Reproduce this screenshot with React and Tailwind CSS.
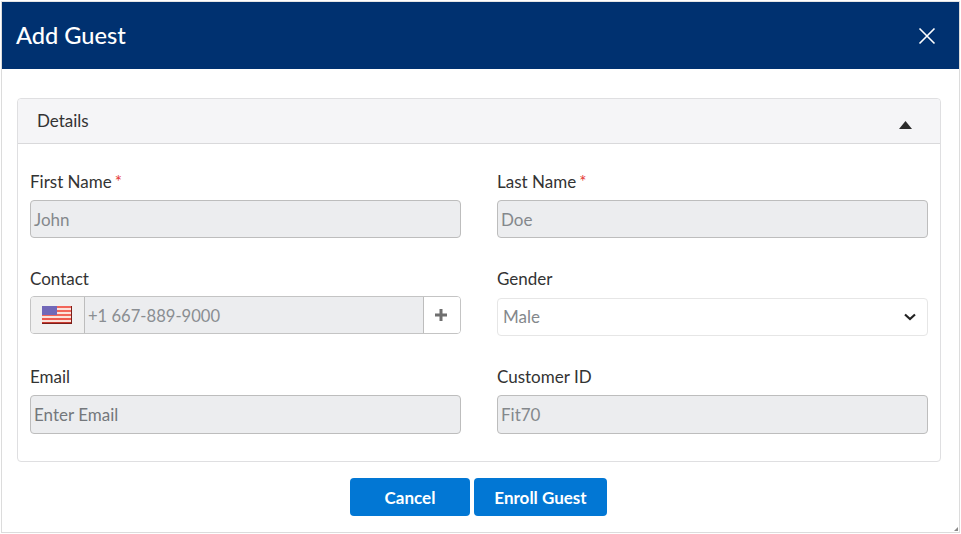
function Label({ children, required }) {
  return (
    <div className="h-[20px] flex items-center text-[17px] leading-[20px] text-[#333]">
      {children}
      {required && <span className="ml-[3px] text-[#e53935]">*</span>}
    </div>
  );
}

function TextField({ label, required, placeholder }) {
  return (
    <div className="flex flex-col">
      <Label required={required}>{label}</Label>
      <div className="mt-[8px] h-[38px] rounded-[4px] border border-[#bdbdbd] bg-[#ecedef] pl-[3px] pt-[2px] flex items-center text-[17px] text-[#84888c]">
        {placeholder}
      </div>
    </div>
  );
}

function Flag() {
  return (
    <svg width="30" height="18" viewBox="0 0 30 18" className="block blur-[0.4px]">
      <rect width="30" height="18" fill="#7a1f1a" />
      <rect y="0" width="29" height="2" fill="#f2665a" />
      <rect y="2" width="29" height="2" fill="#fbe3dc" />
      <rect y="4" width="29" height="2" fill="#f2665a" />
      <rect y="6" width="29" height="2" fill="#fbe3dc" />
      <rect y="8" width="29" height="2" fill="#f2665a" />
      <rect y="10" width="29" height="2" fill="#fbe3dc" />
      <rect y="12" width="29" height="2" fill="#ee5a4e" />
      <rect y="14" width="29" height="2" fill="#fbe3dc" />
      <rect y="16" width="29" height="1" fill="#c8392f" />
      <rect width="15" height="9" fill="#7268b8" />
    </svg>
  );
}

export default function App() {
  return (
    <div className="w-[961px] h-[534px] bg-white font-['Lato','Carlito','Open_Sans',sans-serif] p-[1px] overflow-hidden">
      <div className="relative h-[532px] border border-[#dcdcdc] border-t-[#e4e4e4] flex flex-col">
        <div className="h-[67px] shrink-0 bg-[#003170] flex items-center justify-between pl-[14px] pr-[23px]">
          <span className="text-[23.6px] text-white font-medium leading-none">Add Guest</span>
          <svg width="18" height="18" viewBox="0 0 18 18" fill="none" stroke="white" strokeWidth="1.6">
            <path d="M1.5 1.5 L16.5 16.5 M16.5 1.5 L1.5 16.5" />
          </svg>
        </div>

        <div className="mt-[29px] ml-[15px] w-[924px] h-[364px] rounded-[4px] border border-[#dfdfe1]">
          <div className="h-[45px] bg-[#f5f5f7] border-b border-[#d9d9db] rounded-t-[4px] flex items-center justify-between pl-[19px] pr-[28px]">
            <span className="text-[17px] text-[#333]">Details</span>
            <svg width="13" height="8" viewBox="0 0 13 8" className="mt-[7px]">
              <path d="M6.5 0 L13 8 L0 8 Z" fill="#2b2b2b" />
            </svg>
          </div>

          <div className="px-[12px] pt-[28px] grid grid-cols-2 gap-x-[36px]">
            <TextField label="First Name" required placeholder="John" />
            <TextField label="Last Name" required placeholder="Doe" />

            <div className="flex flex-col mt-[31px]">
              <Label>Contact</Label>
              <div className="mt-[7px] h-[38px] rounded-[4px] border border-[#c4c4c4] flex overflow-hidden">
                <div className="w-[54px] shrink-0 bg-[#f0f0f0] border-r border-[#bdbdbd] flex items-center justify-center pr-[2px]">
                  <Flag />
                </div>
                <div className="flex-1 bg-[#ecedef] flex items-center pl-[3px] pt-[2px] text-[16.6px] text-[#8a8e92]">+1 667-889-9000</div>
                <div className="w-[37px] shrink-0 bg-white border-l border-[#bdbdbd] flex items-center justify-center pr-[2px]">
                  <svg width="12" height="12" viewBox="0 0 12 12">
                    <path d="M4.5 0 H7.5 V4.5 H12 V7.5 H7.5 V12 H4.5 V7.5 H0 V4.5 H4.5 Z" fill="#6f6f6f" />
                  </svg>
                </div>
              </div>
            </div>

            <div className="flex flex-col mt-[31px]">
              <Label>Gender</Label>
              <div className="mt-[9px] h-[38px] rounded-[4px] border border-[#e6e6e6] bg-white flex items-center justify-between pl-[5px] pr-[11px] text-[17px] text-[#84888c]">
                <span>Male</span>
                <svg width="12" height="8" viewBox="0 0 12 8" fill="none" stroke="#222" strokeWidth="2.2">
                  <path d="M1 1.5 L6 6 L11 1.5" />
                </svg>
              </div>
            </div>

            <div className="mt-[31px] flex flex-col">
              <Label>Email</Label>
              <div className="mt-[8px] h-[39px] rounded-[4px] border border-[#bdbdbd] bg-[#ecedef] px-[3px] flex items-center text-[17px] text-[#74787c]">Enter Email</div>
            </div>
            <div className="mt-[31px] flex flex-col">
              <Label>Customer ID</Label>
              <div className="mt-[8px] h-[39px] rounded-[4px] border border-[#bdbdbd] bg-[#ecedef] px-[3px] flex items-center text-[17px] text-[#84888c]">Fit70</div>
            </div>
          </div>
        </div>

        <div className="mt-[16px] flex justify-center gap-[4px] pr-[4px]">
          <button className="w-[120px] h-[38px] pt-[2px] rounded-[4px] bg-[#0277d4] text-white text-[17px] font-bold">Cancel</button>
          <button className="w-[133px] h-[38px] pt-[2px] rounded-[4px] bg-[#0277d4] text-white text-[17px] font-bold">Enroll Guest</button>
        </div>

        <svg width="6" height="6" viewBox="0 0 6 6" className="absolute right-0 bottom-0">
          <path d="M5 1 V5 H1 Z" fill="#888" />
        </svg>
      </div>
    </div>
  );
}
